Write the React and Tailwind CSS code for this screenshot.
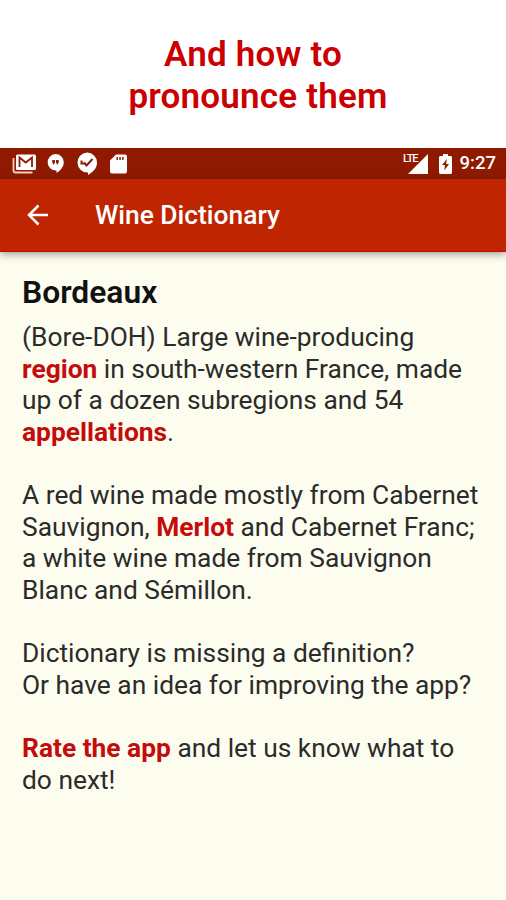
const paragraphs = [
  [
    ['(Bore-DOH) Large wine-producing'],
    [{ term: 'region' }, ' in south-western France, made'],
    ['up of a dozen subregions and 54'],
    [{ term: 'appellations' }, '.'],
  ],
  [
    ['A red wine made mostly from Cabernet'],
    ['Sauvignon, ', { term: 'Merlot' }, ' and Cabernet Franc;'],
    ['a white wine made from Sauvignon'],
    ['Blanc and Sémillon.'],
  ],
  [
    ['Dictionary is missing a definition?'],
    ['Or have an idea for improving the app?'],
  ],
  [
    [{ term: 'Rate the app' }, ' and let us know what to'],
    ['do next!'],
  ],
]

function StatusBar() {
  return (
    <div className="flex h-[31px] items-center justify-between bg-[#8f1a00] pl-3 pr-[10px] text-white">
      <div className="flex items-center">
        {/* Gmail */}
        <svg width="24" height="22" viewBox="0 0 24 22">
          <path d="M1.500 5v12.500a2 2 0 0 0 2 2h17" fill="none" stroke="#f0cfc8" strokeWidth="1.800" />
          <rect x="4" y="1.500" width="20" height="15.500" rx="1.500" fill="currentColor" />
          <path d="M7.500 14V4.500l6.200 5 6.300-5V14" fill="none" stroke="#8f1a00" strokeWidth="1.800" />
        </svg>
        {/* Hangouts */}
        <svg className="ml-[11px]" width="17" height="20" viewBox="0 0 17 20" fill="currentColor">
          <path fillRule="evenodd" d="M8.500 0a8.300 8.300 0 0 1 8.300 8.300c0 5-4 8.700-7.300 10.700V16.600a8.300 8.300 0 0 1-1-16.600zM5.300 6v3.200h1.200L5.900 10.500H7l1-2V6zm3.700 0v3.200h1.200l-.6 1.300h1.100l1-2V6z" />
        </svg>
        {/* Check badge */}
        <svg className="ml-[12px]" width="22" height="24" viewBox="0 0 22 24">
          <path fill="currentColor" d="M11 0.500a10 10 0 0 1 10 10c0 6-4.500 10-9 12.500v-2.500A10 10 0 0 1 11 0.500z" />
          <path d="M5.500 8.500v3h3M8 10.500l2.500 3 6-6.500" fill="none" stroke="#8f1a00" strokeWidth="2" />
        </svg>
        {/* SD card */}
        <svg className="ml-[12px]" width="17" height="20" viewBox="0 0 17 20" fill="currentColor">
          <path fillRule="evenodd" d="M6 0.500h9a2 2 0 0 1 2 2v15a2 2 0 0 1-2 2H2a2 2 0 0 1-2-2V6.500zM6.500 3v3H8V3zm2.800 0v3h1.500V3zm2.800 0v3h1.500V3z" />
        </svg>
      </div>
      <div className="flex items-center">
        <div className="flex items-start">
          <span className="text-[11px] leading-[10px] font-medium tracking-[-1px]">LTE</span>
          <svg className="-ml-[10px]" width="20" height="20" viewBox="0 0 20 20" fill="currentColor">
            <path d="M20 0v20H0z" />
          </svg>
        </div>
        <svg className="ml-[11px]" width="13" height="20" viewBox="0 0 13 20" fill="currentColor">
          <path fillRule="evenodd" d="M4 0h5v2h3l1 1v16l-1 1H1l-1-1V3l1-1h3zM8 5L3 11h3l-.7 5.500L10 10H7z" />
        </svg>
        <span className="ml-[8px] text-[18.500px] leading-none font-medium">9:27</span>
      </div>
    </div>
  )
}

export default function App() {
  return (
    <div className="flex h-[900px] w-[506px] flex-col overflow-hidden bg-white font-['Roboto',sans-serif]">
      <h1 className="h-[148px] pt-[34px] text-center text-[35px] leading-[42px] font-semibold tracking-[0.2px] text-[#cb0000]">
        And how to
        <br />
        <span className="pl-[10px]">pronounce them</span>
      </h1>
      <StatusBar />
      <header className="relative flex h-[73px] items-center border-b border-[#c40a0a] bg-[#bf2500] pl-[26px] text-white shadow-[0_2px_8px_rgba(0,0,0,0.4)]">
        <svg width="23" height="22" viewBox="0 0 23 22" fill="none" stroke="currentColor" strokeWidth="2.500">
          <path d="M22 11H3M12.500 1.500L3 11l9.500 9.500" />
        </svg>
        <h2 className="ml-[46px] pt-px text-[26.4px] font-medium">Wine Dictionary</h2>
      </header>
      <main className="flex-1 bg-[#fdfdef] px-[22px] pt-[22px] text-[#2b2b2b]">
        <h3 className="text-[31.8px] leading-[36px] font-semibold text-[#111]">Bordeaux</h3>
        <div className="mt-[12px] space-y-[31.6px] text-[26.35px] leading-[31.62px] whitespace-nowrap">
          {paragraphs.map((lines, i) => (
            <p key={i}>
              {lines.map((parts, j) => (
                <span key={j} className="block">
                  {parts.map((part, k) =>
                    part.term ? (
                      <a key={k} className="font-bold text-[#c40c0c]">{part.term}</a>
                    ) : (
                      part
                    )
                  )}
                </span>
              ))}
            </p>
          ))}
        </div>
      </main>
    </div>
  )
}
